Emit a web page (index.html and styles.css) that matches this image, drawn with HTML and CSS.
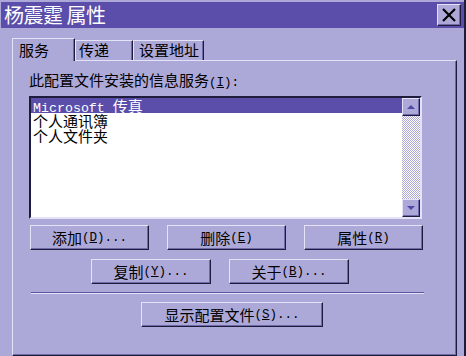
FILE: index.html
```html
<!DOCTYPE html>
<html lang="zh-CN">
<head>
<meta charset="utf-8">
<title>杨震霆 属性</title>
<link rel="stylesheet" href="styles.css">
</head>
<body>
<div class="dialog">
  <div class="titlebar">
    <span class="title">杨震霆 属性</span>
    <div class="close">
      <svg width="14" height="14" viewBox="0 0 14 14"><path d="M1 1 L13 13 M13 1 L1 13" stroke="#000" stroke-width="2.2" fill="none"/></svg>
    </div>
  </div>
  <div class="body">
    <div class="tabs">
      <div class="tab active t1">服务</div>
      <div class="tab t2">传递</div>
      <div class="tab t3">设置地址</div>
    </div>
    <div class="panel">
      <div class="label">此配置文件安装的信息服务<span class="lat">(<u>I</u>):</span></div>
      <div class="listbox">
        <div class="items">
          <div class="item sel"><span class="latm">Microsoft </span>传真</div>
          <div class="item">个人通讯簿</div>
          <div class="item">个人文件夹</div>
        </div>
        <div class="vscroll">
          <div class="sbtn"><span class="arrow up"></span></div>
          <div class="track"></div>
          <div class="sbtn"><span class="arrow down"></span></div>
        </div>
      </div>
      <div class="row row1">
        <div class="btn">添加<span class="lat">(<u>D</u>)...</span></div>
        <div class="btn">删除<span class="lat">(<u>E</u>)</span></div>
        <div class="btn">属性<span class="lat">(<u>R</u>)</span></div>
      </div>
      <div class="row row2">
        <div class="btn w120">复制<span class="lat">(<u>Y</u>)...</span></div>
        <div class="btn w120">关于<span class="lat">(<u>B</u>)...</span></div>
      </div>
      <div class="sep"></div>
      <div class="row row3">
        <div class="btn wide">显示配置文件<span class="lat">(<u>S</u>)...</span></div>
      </div>
    </div>
  </div>
</div>
</body>
</html>
```

FILE: styles.css
```css
html, body {
  margin: 0;
  padding: 0;
}
body {
  width: 466px;
  height: 356px;
  overflow: hidden;
  background: #aca9d9;
  font-family: "Noto Sans CJK SC", sans-serif;
  font-size: 15px;
  color: #000;
}
.dialog {
  box-sizing: border-box;
  width: 466px;
  height: 356px;
  padding: 2px 0 0 1px;
  border-right: 2px solid #1e1c3c;
  background: #aca9d9;
}
.titlebar {
  height: 26px;
  background: #5a4eaa;
  display: flex;
  align-items: center;
  justify-content: space-between;
  padding: 0 3px 0 3px;
}
.title {
  color: #fff;
  font-size: 20px;
  line-height: 26px;
  letter-spacing: -0.5px;
}
.close {
  box-sizing: border-box;
  width: 24px;
  height: 22px;
  background: #aca9d9;
  border: 1px solid;
  border-color: #e4e2f6 #1e1c3c #1e1c3c #e4e2f6;
  box-shadow: inset -1px -1px #6e6aa8;
  display: flex;
  align-items: center;
  justify-content: center;
}
.body {
  padding: 10px 0 0 11px;
}
.tabs {
  display: flex;
  align-items: flex-end;
  height: 22px;
}
.tab {
  box-sizing: border-box;
  height: 20px;
  line-height: 18px;
  border: 1px solid;
  border-bottom: none;
  border-color: #e4e2f6 #1e1c3c #e4e2f6 #e4e2f6;
  box-shadow: inset -1px 0 #6e6aa8;
  background: #aca9d9;
  white-space: nowrap;
}
.tab.active {
  height: 23px;
  line-height: 21px;
  margin-bottom: -1px;
  position: relative;
  z-index: 1;
}
.t1 { width: 63px; padding-left: 6px; }
.t2 { width: 58px; padding-left: 3px; }
.t3 { width: 71px; padding-left: 5px; }
.panel {
  box-sizing: border-box;
  width: 445px;
  height: 296px;
  border: 1px solid;
  border-color: #e4e2f6 #1e1c3c #1e1c3c #e4e2f6;
  box-shadow: inset -1px -1px #6e6aa8;
  padding-left: 16px;
}
.lat {
  font-family: "Liberation Mono", monospace;
  font-size: 12.5px;
}
.latm {
  font-family: "Liberation Mono", monospace;
  font-size: 13.3px;
  white-space: pre;
}
.label {
  margin-top: 11px;
  line-height: 16px;
  height: 16px;
}
.listbox {
  box-sizing: border-box;
  margin-top: 8px;
  width: 393px;
  height: 123px;
  border: 2px solid;
  border-color: #1e1c3c #e4e2f6 #e4e2f6 #1e1c3c;
  background: #fff;
  display: flex;
}
.items {
  flex: 1;
}
.item {
  height: 15px;
  line-height: 15px;
  padding-left: 2px;
  white-space: nowrap;
}
.item.sel {
  background: #5a4eaa;
  color: #fff;
}
.vscroll {
  width: 18px;
  display: flex;
  flex-direction: column;
}
.sbtn {
  box-sizing: border-box;
  height: 18px;
  background: #aca9d9;
  border: 1px solid;
  border-color: #e4e2f6 #1e1c3c #1e1c3c #e4e2f6;
  box-shadow: inset -1px -1px #6e6aa8;
  display: flex;
  align-items: center;
  justify-content: center;
}
.arrow {
  width: 0;
  height: 0;
  border-left: 4px solid transparent;
  border-right: 4px solid transparent;
}
.arrow.up { border-bottom: 4px solid #5048a8; }
.arrow.down { border-top: 4px solid #5048a8; }
.track {
  flex: 1;
  background: repeating-conic-gradient(#ffffff 0 25%, #aca9d9 0 50%) 0 0 / 2px 2px;
}
.row {
  display: flex;
  gap: 18px;
}
.row1 { margin-top: 6px; margin-left: 1px; }
.row2 { margin-top: 9px; margin-left: 62px; }
.row3 { margin-top: 8px; margin-left: 112px; }
.btn {
  box-sizing: border-box;
  width: 119px;
  height: 25px;
  background: #aca9d9;
  border: 1px solid;
  border-color: #e4e2f6 #1e1c3c #1e1c3c #e4e2f6;
  box-shadow: inset -1px -1px #6e6aa8;
  display: flex;
  align-items: center;
  justify-content: center;
  line-height: 16px;
  white-space: nowrap;
}
.btn.w120 { width: 120px; }
.btn.wide { width: 182px; }
.sep {
  margin-top: 8px;
  margin-left: 2px;
  width: 393px;
  height: 1px;
  background: #5a56a0;
  border-bottom: 1px solid #e4e2f6;
}
```
